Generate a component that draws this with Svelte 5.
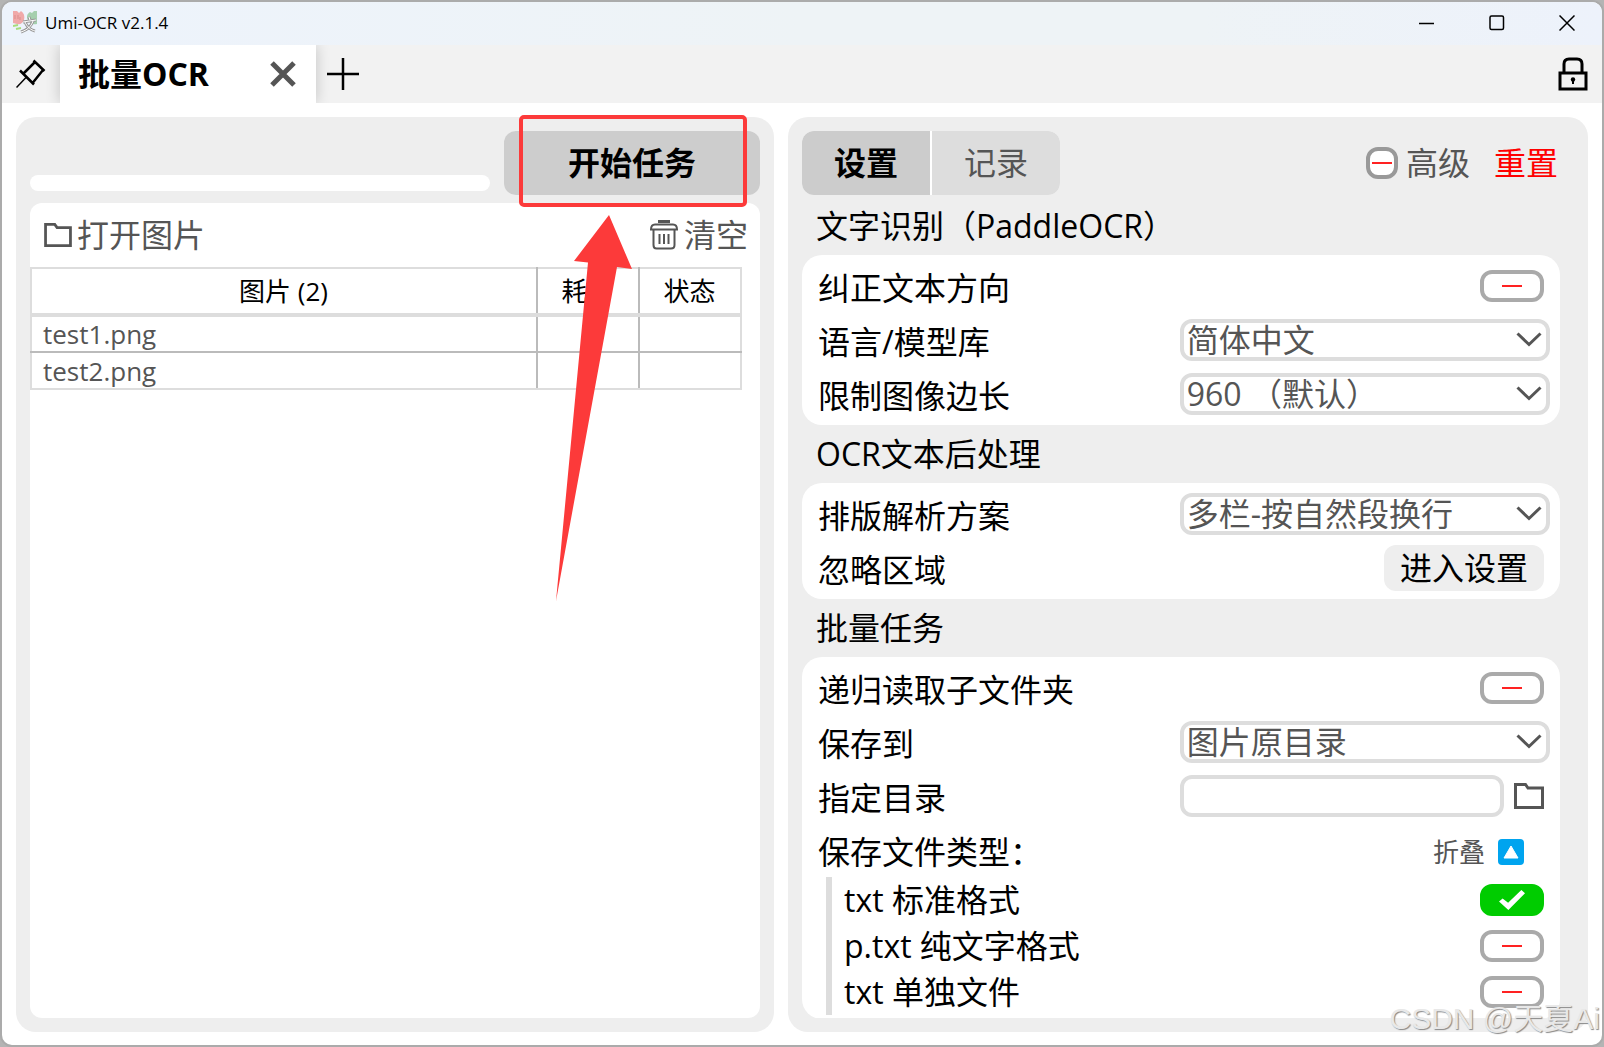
<script>
	let progress = 0;
	let advanced = false;

	let files = [
		{ name: 'test1.png', time: '', state: '' },
		{ name: 'test2.png', time: '', state: '' }
	];

	let groups = [
		{
			title: '文字识别（PaddleOCR）',
			rows: [
				{ id: 'cls', label: '纠正文本方向', type: 'switch', value: false },
				{ id: 'lang', label: '语言/模型库', type: 'select', options: ['简体中文', 'English', '日本語'] },
				{ id: 'limit', label: '限制图像边长', type: 'select', options: ['960 （默认）', '2880', '4320'] }
			]
		},
		{
			title: 'OCR文本后处理',
			rows: [
				{ id: 'parser', label: '排版解析方案', type: 'select', options: ['多栏-按自然段换行', '单栏-总是换行'] },
				{ id: 'ignore', label: '忽略区域', type: 'button', text: '进入设置' }
			]
		},
		{
			title: '批量任务',
			rows: [
				{ id: 'recurse', label: '递归读取子文件夹', type: 'switch', value: false },
				{ id: 'dirType', label: '保存到', type: 'select', options: ['图片原目录', '指定目录'] },
				{ id: 'dir', label: '指定目录', type: 'file', value: '' },
				{
					id: 'fileTypes',
					label: '保存文件类型：',
					type: 'fold',
					open: true,
					children: [
						{ id: 'txt', label: 'txt 标准格式', value: true },
						{ id: 'txtPlain', label: 'p.txt 纯文字格式', value: false },
						{ id: 'txtSingle', label: 'txt 单独文件', value: false }
					]
				}
			]
		}
	];
</script>

<div class="window">
	<header class="title-bar">
		<svg class="logo" viewBox="0 0 24 24">
			<path d="M0 0h4l2 2 2-2c3 2 4 5 3 9-1 3-4 5-7 4L0 12z" fill="#f0a9a9" />
			<path d="M24 0h-3l-2 2-2-1c-3 2-4 5-2 8 2 4 5 5 9 4z" fill="#a5cfae" />
			<path d="M2 4v4M5 4v4M7 6v3" stroke="#d98d8d" fill="none" />
			<path d="M0 15l5-1M3 18l5-1" stroke="#a8dc7c" stroke-width="2" fill="none" />
			<path d="M16 6l1 3M10 11l13-2M20 10c-2 6-6 9-12 11M12 11c2 5 6 8 10 9" stroke="#999" stroke-width="3" fill="none" />
			<path d="M16 6l1 3M10 11l13-2M20 10c-2 6-6 9-12 11M12 11c2 5 6 8 10 9" stroke="#fff" stroke-width="1" fill="none" />
		</svg>
		<span class="title">Umi-OCR v2.1.4</span>
		<div class="controls">
			<button aria-label="最小化">
				<svg viewBox="0 0 16 16"><path d="M0 8.5h15" /></svg>
			</button>
			<button aria-label="最大化">
				<svg viewBox="0 0 16 16"><rect x="1" y="1" width="13.500" height="13.500" rx="1.500" /></svg>
			</button>
			<button aria-label="关闭">
				<svg viewBox="0 0 16 16"><path d="M.5.5l15 15M15.500.5l-15 15" /></svg>
			</button>
		</div>
	</header>

	<nav class="tab-bar">
		<button class="pin" aria-label="置顶">
			<svg viewBox="0 0 30 30">
				<path d="M17.500 1.500l11 10.500M19 3l-12 12M27 11l-10 12.500M4 11.500l14 14" stroke-width="2.500" />
				<path d="M10 18.500l-9.500 10" stroke-width="1.500" />
			</svg>
		</button>
		<div class="tab">
			<span>批量OCR</span>
			<button aria-label="关闭标签页">
				<svg viewBox="0 0 26 26"><path d="M2 2l22 22M24 2l-22 22" /></svg>
			</button>
		</div>
		<button class="add" aria-label="新标签页">
			<svg viewBox="0 0 32 32"><path d="M16 0v32M0 16h32" /></svg>
		</button>
		<button class="lock" aria-label="锁定">
			<svg viewBox="0 0 30 34">
				<rect x="2" y="16" width="26" height="16" stroke-width="3" />
				<path d="M6 16V7q0-5 5-5h8q5 0 5 5v9" stroke-width="3" />
				<circle cx="15" cy="22.500" r="2.200" fill="#000" stroke="none" />
				<path d="M15 22v5" stroke-width="2" />
			</svg>
		</button>
	</nav>

	<main>
		<section class="panel">
			<div class="run-bar">
				<div class="progress"><div style="width: {progress}%"></div></div>
				<div class="run-box">
					<button class="run">开始任务</button>
					<div class="mark-frame"></div>
					<svg class="mark-arrow" viewBox="0 0 60 386">
						<path d="M54 2l23 54-15-2L1 388 33 49.500 19 48z" fill="#fc3a3a" />
					</svg>
				</div>
			</div>

			<div class="files">
				<div class="file-tools">
					<button>
						<svg class="folder small" viewBox="0 0 30 26"><path d="M1.500 1.500h10l2.500 3.500h14.500v19.500h-27z" /></svg>
						打开图片
					</button>
					<button class="clear">
						<svg class="trash" viewBox="0 0 30 30">
							<path d="M9 1.500h12" stroke-width="3" />
							<path d="M2 9.500q0-5 4-5h18q4 0 4 5z" />
							<path d="M4.500 10v15q0 3.500 3 3.500h14.500q3.500 0 3.500-3.500V10M10.500 14v10M15 14v10M19.500 14v10" />
						</svg>
						清空
					</button>
				</div>
				<table>
					<thead>
						<tr>
							<th>图片 ({files.length})</th>
							<th class="narrow">耗时</th>
							<th class="narrow">状态</th>
						</tr>
					</thead>
					<tbody>
						{#each files as file}
							<tr>
								<td>{file.name}</td>
								<td>{file.time}</td>
								<td>{file.state}</td>
							</tr>
						{/each}
					</tbody>
				</table>
			</div>
		</section>

		<section class="panel">
			<div class="side-bar">
				<div class="side-tabs">
					<button class="active">设置</button>
					<button>记录</button>
				</div>
				<div class="side-tools">
					<input id="advanced" class="switch small" type="checkbox" bind:checked={advanced} />
					<label for="advanced">高级</label>
					<button class="reset">重置</button>
				</div>
			</div>

			<div class="settings">
				{#each groups as group}
					<h2>{group.title}</h2>
					<div class="card">
						{#each group.rows as row}
							{#if row.type === 'fold'}
								<div class="row">
									<span class="label">{row.label}</span>
									<button class="fold" onclick={() => (row.open = !row.open)}>
										折叠
										<svg viewBox="0 0 26 26">
											<rect width="26" height="26" rx="4" fill="#00a4ef" />
											<path d="M13 7l7 12H6z" fill="#fff" stroke="#fff" stroke-linejoin="round" />
										</svg>
									</button>
								</div>
								{#if row.open}
									<div class="children">
										{#each row.children as child}
											<div class="row">
												<label for={child.id}>{child.label}</label>
												<input id={child.id} class="switch" type="checkbox" bind:checked={child.value} />
											</div>
										{/each}
									</div>
								{/if}
							{:else}
								<div class="row">
									<label class="label" for={row.id}>{row.label}</label>
									{#if row.type === 'switch'}
										<input id={row.id} class="switch" type="checkbox" bind:checked={row.value} />
									{:else if row.type === 'select'}
										<div class="select">
											<select id={row.id}>
												{#each row.options as option}
													<option>{option}</option>
												{/each}
											</select>
											<svg viewBox="0 0 26 16"><path d="M1.500 1.500l11.500 11 11.500-11" /></svg>
										</div>
									{:else if row.type === 'button'}
										<button id={row.id} class="enter">{row.text}</button>
									{:else}
										<div class="path">
											<input id={row.id} type="text" bind:value={row.value} />
											<button aria-label="选择目录">
												<svg class="folder" viewBox="0 0 30 26"><path d="M1.500 1.500h10l2.500 3.500h14.500v19.500h-27z" /></svg>
											</button>
										</div>
									{/if}
								</div>
							{/if}
						{/each}
					</div>
				{/each}
			</div>
		</section>
	</main>

	<div class="watermark">CSDN @天夏Ai</div>
</div>

<style>
	:global(body) {
		background: #b4b4b4;
	}

	.window {
		position: relative;
		box-sizing: border-box;
		height: 100vh;
		display: flex;
		flex-direction: column;
		overflow: hidden;
		border: 2px solid #ababab;
		border-radius: 12px;
		background: #fff;
		color: #000;
		font-family: 'Open Sans', 'Noto Sans CJK SC', sans-serif;
		font-size: 32px;
		line-height: 40px;
	}

	button,
	input,
	select {
		box-sizing: border-box;
		margin: 0;
		padding: 0;
		border: none;
		background: none;
		color: inherit;
		font: inherit;
	}

	button {
		display: flex;
		align-items: center;
		justify-content: center;
		white-space: nowrap;
	}

	svg {
		display: block;
		flex: none;
		fill: none;
		stroke: currentColor;
	}

	.title-bar {
		box-sizing: border-box;
		flex: none;
		height: 43px;
		display: flex;
		align-items: center;
		gap: 8px;
		padding: 0 0 2px 11px;
		background: linear-gradient(90deg, #edf3fc, #eef3f6 50%, #eef3f6 75%, #edf2fb);
	}

	.logo {
		width: 24px;
		height: 24px;
		stroke: none;
	}

	.title {
		font-size: 17px;
		line-height: 24px;
	}

	.controls {
		display: flex;
		margin-left: auto;
	}

	.controls button {
		width: 70px;
		height: 40px;
	}

	.controls svg {
		width: 16px;
		height: 16px;
		stroke-width: 1.5;
	}

	.tab-bar {
		flex: none;
		height: 58px;
		display: flex;
		align-items: stretch;
		background: #f2f2f2;
	}

	.pin {
		width: 58px;
	}

	.pin svg {
		width: 30px;
		height: 30px;
	}

	.tab {
		box-sizing: border-box;
		width: 256px;
		display: flex;
		align-items: center;
		justify-content: space-between;
		padding: 0 20px 0 18px;
		background: #fff;
		box-shadow: 0 0 14px rgba(0, 0, 0, 0.2);
		clip-path: inset(0 -14px 0 -14px);
		font-weight: bold;
	}

	.tab svg {
		width: 26px;
		height: 26px;
		stroke: #555;
		stroke-width: 5;
	}

	.add {
		width: 54px;
	}

	.add svg {
		width: 32px;
		height: 32px;
		stroke-width: 2.5;
	}

	.lock {
		margin-left: auto;
		padding-right: 14px;
	}

	.lock svg {
		width: 30px;
		height: 34px;
	}

	main {
		flex: 1;
		min-height: 0;
		display: grid;
		grid-template-columns: 758fr 800fr;
		grid-template-rows: minmax(0, 1fr);
		gap: 14px;
		padding: 14px 14px 13px;
	}

	.panel {
		display: flex;
		flex-direction: column;
		min-width: 0;
		padding: 14px;
		border-radius: 20px;
		background: #eee;
	}

	.run-bar {
		display: flex;
		align-items: flex-end;
		gap: 14px;
		margin-bottom: 8px;
	}

	.progress {
		flex: 1;
		height: 16px;
		margin-bottom: 4px;
		border-radius: 8px;
		background: #fff;
		overflow: hidden;
	}

	.progress div {
		height: 100%;
		background: #0c0;
	}

	.run-box {
		position: relative;
		width: 256px;
	}

	.run {
		width: 100%;
		height: 64px;
		border-radius: 12px;
		background: #cdcdcd;
		font-weight: bold;
	}

	/* callout over the start button */
	.mark-frame {
		position: absolute;
		inset: -16px 13px -12px 15px;
		border: 4px solid #fc3a3a;
		border-radius: 5px;
		z-index: 1;
		pointer-events: none;
	}

	.mark-arrow {
		position: absolute;
		left: 51px;
		top: 82px;
		width: 60px;
		height: 386px;
		overflow: visible;
		stroke: none;
		z-index: 1;
		pointer-events: none;
	}

	.files {
		flex: 1;
		min-height: 0;
		border-radius: 12px;
		background: #fff;
		overflow: hidden;
	}

	.file-tools {
		height: 64px;
		display: flex;
		align-items: center;
		justify-content: space-between;
		padding: 0 12px 0 14px;
		color: #555;
	}

	.file-tools button {
		gap: 5px;
	}

	.folder {
		width: 30px;
		height: 26px;
		stroke-width: 3;
	}

	.folder.small {
		width: 28px;
		height: 24px;
	}

	.trash {
		width: 30px;
		height: 30px;
		stroke-width: 2;
	}

	table {
		width: calc(100% - 18px);
		border-collapse: collapse;
		table-layout: fixed;
		font-size: 26px;
		line-height: 34px;
	}

	th,
	td {
		box-sizing: border-box;
		border: 2px solid #ddd;
		border-right-color: #bbb;
		padding: 0 12px 0 11px;
	}

	th:last-child,
	td:last-child {
		border-right-color: #ddd;
	}

	th {
		height: 47px;
		border-bottom-width: 4px;
		font-weight: normal;
	}

	td {
		height: 37px;
		color: #555;
	}

	tbody tr:first-child td {
		border-bottom-color: #bbb;
	}

	.narrow {
		width: 102px;
	}

	.side-bar {
		flex: none;
		display: flex;
		align-items: center;
		justify-content: space-between;
		margin-bottom: 2px;
	}

	.side-tabs {
		display: flex;
		gap: 2px;
		border-radius: 12px;
		background: #fff;
		overflow: hidden;
	}

	.side-tabs button {
		width: 128px;
		height: 64px;
		background: #ddd;
		color: #555;
	}

	.side-tabs .active {
		background: #ccc;
		color: #000;
		font-weight: bold;
	}

	.side-tools {
		display: flex;
		align-items: center;
		gap: 8px;
		padding-right: 16px;
		color: #555;
	}

	.reset {
		margin-left: 16px;
		color: #f00;
	}

	.settings {
		flex: 1;
		min-height: 0;
		margin-right: 14px;
		overflow: hidden;
	}

	h2 {
		height: 58px;
		margin: 0;
		padding-left: 14px;
		font-size: 32px;
		font-weight: normal;
		line-height: 58px;
	}

	.card {
		padding: 4px 16px;
		border-radius: 20px;
		background: #fff;
	}

	.row {
		height: 54px;
		display: flex;
		align-items: center;
		justify-content: space-between;
	}

	.label {
		padding-top: 3px;
	}

	.switch {
		appearance: none;
		display: grid;
		place-items: center;
		width: 64px;
		height: 32px;
		border: 4px solid #aaa;
		border-radius: 12px;
		background: #fff;
	}

	.switch.small {
		width: 32px;
		border-color: #999;
	}

	.switch::before {
		content: '';
		width: 20px;
		height: 2px;
		background: #f22;
	}

	.switch:checked {
		border-color: #0c0;
		background: #0c0;
	}

	.switch:checked::before {
		width: 26px;
		height: 20px;
		background: #fff;
		clip-path: polygon(0 58%, 14% 42%, 35% 64%, 86% 0, 100% 16%, 36% 100%);
	}

	.select,
	.path {
		width: 51%;
		margin-right: -6px;
	}

	.select {
		position: relative;
	}

	.select svg {
		position: absolute;
		right: 8px;
		top: 13px;
		width: 26px;
		height: 16px;
		stroke: #555;
		stroke-width: 3;
		pointer-events: none;
	}

	select,
	.path input {
		appearance: none;
		display: block;
		width: 100%;
		height: 42px;
		border: 4px solid #ddd;
		border-radius: 12px;
		padding: 0 3px;
		background: #fff;
		color: #555;
		line-height: 34px;
	}

	.path {
		display: flex;
		align-items: center;
		gap: 10px;
		padding-right: 6px;
		box-sizing: border-box;
	}

	.path input {
		flex: 1;
		min-width: 0;
	}

	.path button {
		color: #555;
	}

	.enter {
		width: 160px;
		height: 46px;
		border-radius: 12px;
		background: #eee;
	}

	.fold {
		gap: 13px;
		padding: 3px 20px 0 0;
		color: #555;
		font-size: 26px;
	}

	.fold svg {
		width: 26px;
		height: 26px;
		stroke: none;
	}

	.children {
		margin-left: 8px;
		padding-left: 12px;
		border-left: 6px solid #ddd;
	}

	.children .row {
		height: 46px;
	}

	.watermark {
		position: absolute;
		right: 2px;
		bottom: 6px;
		color: #e8e8e8;
		font-family: 'Liberation Sans', 'Noto Sans CJK SC', sans-serif;
		font-size: 30px;
		line-height: 40px;
		text-shadow: 1px 1px 1px #888;
		pointer-events: none;
	}
</style>
